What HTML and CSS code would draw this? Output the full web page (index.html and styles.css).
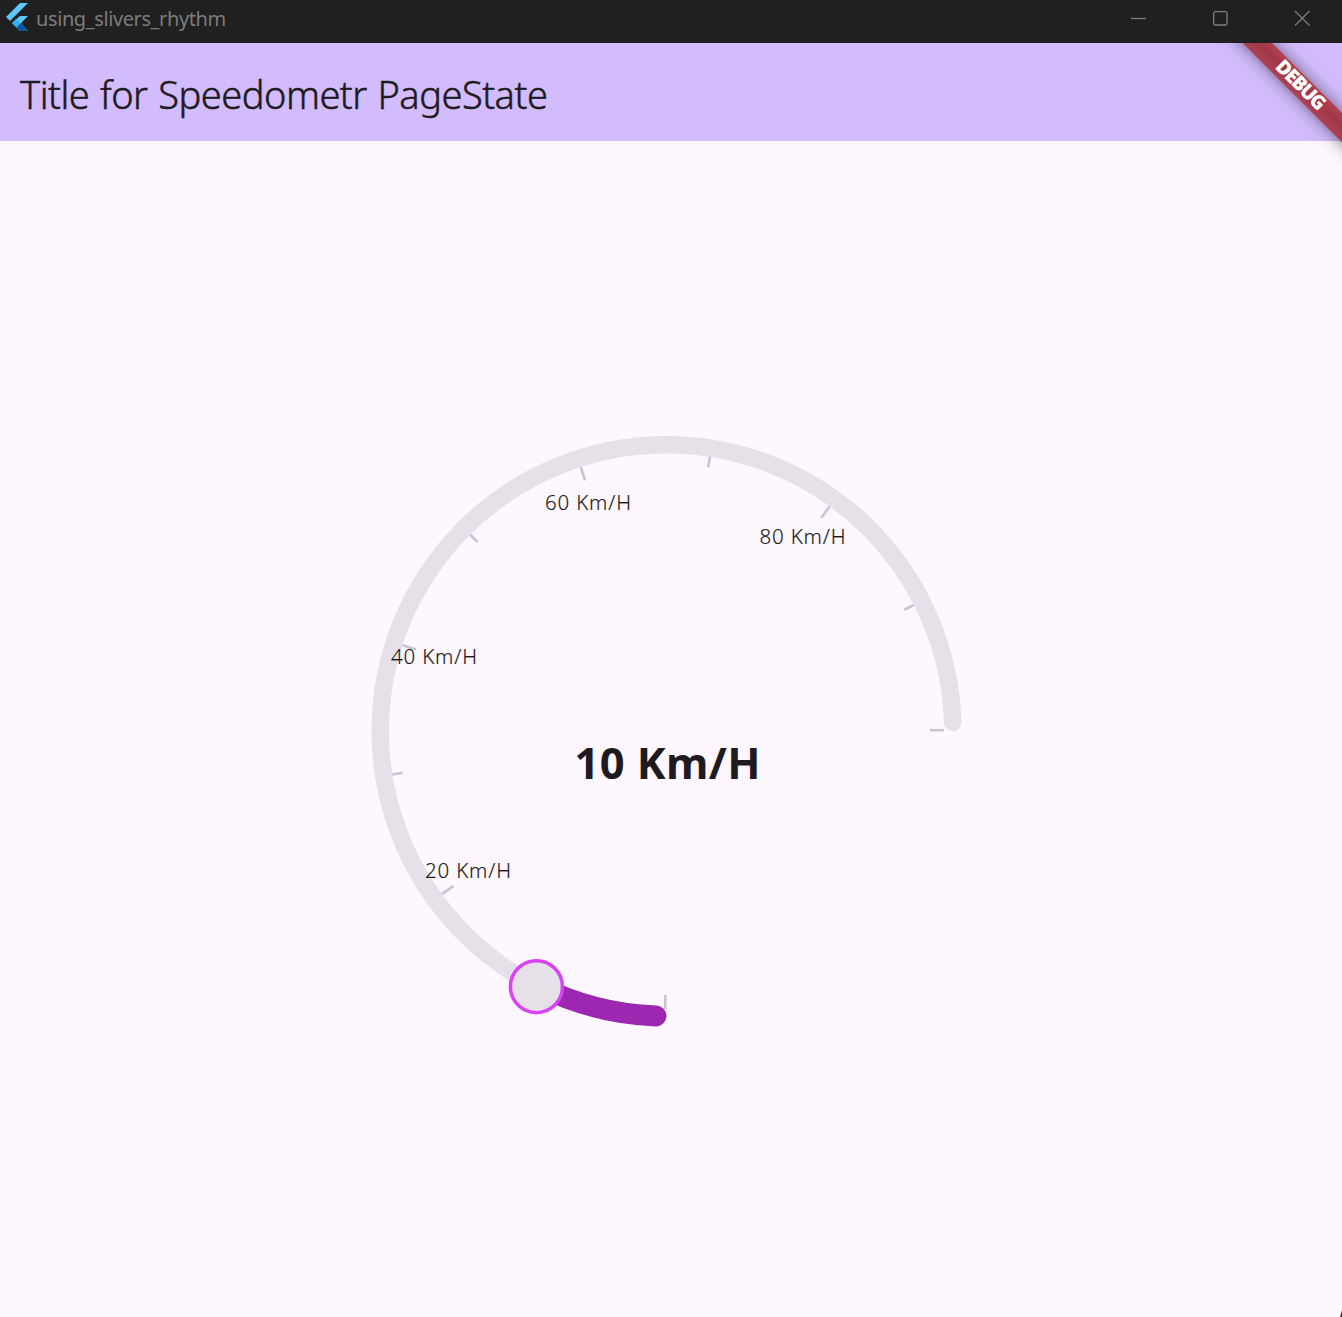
FILE: index.html
```html
<!DOCTYPE html>
<html lang="en">
<head>
<meta charset="utf-8">
<title>using_slivers_rhythm</title>
<link rel="stylesheet" href="styles.css">
</head>
<body>
<div class="window">
  <header class="titlebar">
    <svg class="logo" width="22" height="28" viewBox="0 0 22 28">
      <path d="M14 0H22L4 18L0 14Z" fill="#5bc8f8"/>
      <path d="M14 13H22L15 20L22 28H14L6 20Z" fill="#5bc8f8"/>
      <path d="M6 20L10 16L15 20L10.5 24.5Z" fill="#35b0ee"/>
      <path d="M10.5 24.5L15 20L22 28H14Z" fill="#09589c"/>
    </svg>
    <span class="window-name">using_slivers_rhythm</span>
    <div class="controls">
      <svg width="16" height="16" viewBox="0 0 16 16"><path d="M1 8.500H16"/></svg>
      <svg width="16" height="16" viewBox="0 0 16 16"><rect x="1.700" y="1.700" width="13.300" height="13.300" rx="1.500"/></svg>
      <svg width="16" height="16" viewBox="0 0 16 16"><path d="M1 1L15.500 15.500M15.500 1L1 15.500"/></svg>
    </div>
  </header>
  <div class="app">
    <div class="appbar"><h1>Title for Speedometr PageState</h1></div>
    <main class="body">
      <svg class="gauge" width="610" height="610" viewBox="361 426 610 610">
        <path class="track" d="M657.500 1017.150A286.300 286.300 0 1 1 952.700 722.500"/>
        <g class="ticks">
          <path d="M665.300 995V1009"/>
          <path d="M930 730.200H944"/>
          <g transform="translate(666.500 731)">
            <path d="M0 263.500V277.500" transform="rotate(54)"/>
            <path d="M0 267V277.500" transform="rotate(81)"/>
            <path d="M0 263.500V277.500" transform="rotate(108)"/>
            <path d="M0 267V277.500" transform="rotate(135)"/>
            <path d="M0 263.500V277.500" transform="rotate(162)"/>
            <path d="M0 267V277.500" transform="rotate(189)"/>
            <path d="M0 263.500V277.500" transform="rotate(216)"/>
            <path d="M0 267V277.500" transform="rotate(243)"/>
          </g>
        </g>
        <path class="range" d="M656 1015.900A285 285 0 0 1 537 985"/>
        <circle class="thumb" cx="536.400" cy="986.700" r="26"/>
        <g class="labels">
          <text x="425" y="878" textLength="86">20 Km/H</text>
          <text x="391" y="664" textLength="86">40 Km/H</text>
          <text x="545" y="510" textLength="86">60 Km/H</text>
          <text x="759.500" y="544" textLength="86">80 Km/H</text>
        </g>
        <text class="value" x="574.500" y="779" textLength="186">10 Km/H</text>
      </svg>
    </main>
    <div class="debug">DEBUG</div>
    <svg class="corner" width="2" height="7" viewBox="0 0 2 7"><path d="M2 0V7H0Z"/></svg>
  </div>
</div>
</body>
</html>
```
FILE: styles.css
```css
body {
  margin: 0;
  font-family: "Noto Sans", "Open Sans", sans-serif;
  color: #1d1b20;
}

.window {
  display: flex;
  flex-direction: column;
  width: 1342px;
  height: 1317px;
  overflow: hidden;
}

.titlebar {
  display: flex;
  align-items: flex-start;
  box-sizing: border-box;
  height: 43px;
  padding: 3px 32px 0 6px;
  background: #202020;
}

.window-name {
  margin-left: 8px;
  color: #7c7c7c;
  font-size: 20px;
  line-height: 32px;
  letter-spacing: -0.4px;
}

.controls {
  display: flex;
  gap: 66px;
  margin: 7px 0 0 auto;
}

.controls svg {
  fill: none;
  stroke: #7e7e7e;
  stroke-width: 1.3;
}

.app {
  position: relative;
  display: flex;
  flex: 1;
  flex-direction: column;
  overflow: hidden;
  background: #fef7ff;
}

.appbar {
  display: flex;
  align-items: center;
  height: 98px;
  padding: 3px 20px 0;
  box-sizing: border-box;
  background: #d2bcfd;
}

h1 {
  margin: 0;
  font-size: 38px;
  font-weight: 350;
  line-height: 50px;
  letter-spacing: -0.5px;
  word-spacing: 1.3px;
  white-space: nowrap;
  -webkit-text-stroke: 0.5px #1d1b20;
}

.body {
  display: flex;
  flex: 1;
  justify-content: center;
  padding: 285px 10px 0 0;
}

.gauge {
  flex: none;
}

.track {
  fill: none;
  stroke: #e6e0e9;
  stroke-width: 17.5;
  stroke-linecap: round;
}

.ticks {
  stroke: #cac4d0;
  stroke-width: 2.6;
}

.range {
  fill: none;
  stroke: #9c27b0;
  stroke-width: 21;
  stroke-linecap: round;
}

.thumb {
  fill: #e6e0e9;
  stroke: #d942f5;
  stroke-width: 3.5;
}

.labels {
  fill: #1d1b20;
  stroke: #1d1b20;
  stroke-width: 0.15;
  font-size: 20.500px;
  font-weight: 350;
}

.value {
  fill: #1d1b20;
  font-size: 43.500px;
  font-weight: 700;
}

/* Corner ribbon */
.debug {
  position: absolute;
  top: 33px;
  left: 1201px;
  width: 200px;
  height: 20.500px;
  transform: rotate(45deg);
  background: linear-gradient(#ad4253, #a13746 50%, #ad4253);
  box-shadow: 0 0 16px rgba(0, 0, 0, 0.5);
  color: #fff;
  font-size: 19.500px;
  font-weight: 900;
  line-height: 18.500px;
  letter-spacing: -1.3px;
  text-indent: -3px;
  text-align: center;
}

.corner {
  position: absolute;
  right: 0;
  bottom: 0;
  fill: #303030;
}
```
